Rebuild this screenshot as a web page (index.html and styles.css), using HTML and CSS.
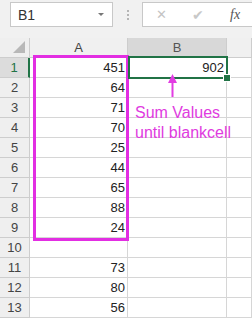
FILE: index.html
```html
<!DOCTYPE html>
<html lang="en">
<head>
    <meta charset="UTF-8">
    <title>Sum until blank cell</title>
    <link rel="stylesheet" href="styles.css">
</head>
<body>
    <div class="toolbar">
        <div class="name-box">
            <span>B1</span>
            <span class="drop"></span>
        </div>
        <div class="dots"><i></i><i></i><i></i></div>
        <div class="formula-box">
            <span class="icon cancel">&#x2715;</span>
            <span class="icon enter">&#x2714;</span>
            <span class="icon fx">fx</span>
        </div>
    </div>

    <div class="sheet-wrap">
        <div class="sheet">
            <div class="hd corner">
                <svg width="14" height="14" viewBox="0 0 14 14"><polygon points="13,1 13,13 1,13" fill="#b8b8b8"/></svg>
            </div>
            <div class="hd col">A</div>
            <div class="hd col sel-col">B</div>
            <div class="hd col"></div>

            <div class="hd row sel-row">1</div><div class="cell num">451</div><div class="cell num">902</div><div class="cell"></div>
            <div class="hd row">2</div><div class="cell num">64</div><div class="cell"></div><div class="cell"></div>
            <div class="hd row">3</div><div class="cell num">71</div><div class="cell"></div><div class="cell"></div>
            <div class="hd row">4</div><div class="cell num">70</div><div class="cell"></div><div class="cell"></div>
            <div class="hd row">5</div><div class="cell num">25</div><div class="cell"></div><div class="cell"></div>
            <div class="hd row">6</div><div class="cell num">44</div><div class="cell"></div><div class="cell"></div>
            <div class="hd row">7</div><div class="cell num">65</div><div class="cell"></div><div class="cell"></div>
            <div class="hd row">8</div><div class="cell num">88</div><div class="cell"></div><div class="cell"></div>
            <div class="hd row">9</div><div class="cell num">24</div><div class="cell"></div><div class="cell"></div>
            <div class="hd row">10</div><div class="cell"></div><div class="cell"></div><div class="cell"></div>
            <div class="hd row">11</div><div class="cell num">73</div><div class="cell"></div><div class="cell"></div>
            <div class="hd row">12</div><div class="cell num">80</div><div class="cell"></div><div class="cell"></div>
            <div class="hd row">13</div><div class="cell num">56</div><div class="cell"></div><div class="cell"></div>
        </div>

        <!-- overlays -->
        <div class="range-box"></div>
        <div class="selection"><span class="handle"></span></div>
        <div class="arrow">
            <svg width="11" height="24" viewBox="0 0 11 24">
                <polygon points="5.5,0 10,9 1,9" fill="#e23ce2"/>
                <rect x="4.5" y="8" width="2" height="15" fill="#e23ce2"/>
            </svg>
        </div>
        <div class="note">Sum Values<br>until blankcell</div>
    </div>
</body>
</html>
```

FILE: styles.css
```css
body {
    margin: 0;
    font-family: "Liberation Sans", Arial, sans-serif;
    background: #ffffff;
    width: 252px;
    overflow: hidden;
}
.toolbar {
    height: 38px;
    background: #f1f1f1;
    position: relative;
    display: flex;
    align-items: flex-start;
    padding-top: 2px;
    box-sizing: border-box;
}
.name-box {
    margin-left: 10px;
    width: 103px;
    height: 25px;
    box-sizing: border-box;
    background: #fff;
    border: 1px solid #c8c8c8;
    display: flex;
    align-items: center;
    justify-content: space-between;
    padding: 0 8px 0 7px;
    font-size: 14px;
    color: #333;
}
.drop {
    width: 0;
    height: 0;
    border-left: 3px solid transparent;
    border-right: 3px solid transparent;
    border-top: 3px solid #777;
}
.dots {
    width: 29px;
    height: 25px;
    display: flex;
    flex-direction: column;
    align-items: center;
    justify-content: center;
    gap: 2px;
}
.dots i {
    width: 2px;
    height: 2px;
    background: #b5b5b5;
}
.formula-box {
    flex: 1;
    height: 25px;
    box-sizing: border-box;
    background: #fff;
    border: 1px solid #c8c8c8;
    border-right: none;
    display: flex;
    align-items: center;
}
.icon {
    color: #c4c4c4;
    font-size: 13px;
}
.cancel {
    margin-left: 13px;
}
.enter {
    margin-left: 25px;
    font-size: 14px;
    color: #c8c8c8;
}
.fx {
    margin-left: 26px;
    font-family: "Liberation Serif", serif;
    font-style: italic;
    font-size: 14px;
    color: #555;
}
.sheet-wrap {
    position: relative;
}
.sheet {
    display: grid;
    grid-template-columns: 30px 98px 99px 25px;
    grid-auto-rows: 20px;
    font-size: 13px;
    color: #222;
}
.hd {
    background: #efefef;
    border-right: 1px solid #cdcdcd;
    border-bottom: 1px solid #cdcdcd;
    display: flex;
    align-items: center;
    justify-content: center;
    color: #444;
    box-sizing: border-box;
}
.corner {
    justify-content: flex-end;
    align-items: flex-end;
    padding: 0 3px 3px 0;
}
.col {
    background: #f0f0f0;
}
.sel-col {
    background: #d8d8d8;
    border-bottom: 2px solid #217346;
    color: #555;
}
.sel-row {
    background: #dcdcdc;
    border-right: 2px solid #217346;
    color: #217346;
}
.cell {
    border-right: 1px solid #d6d6d6;
    border-bottom: 1px solid #d6d6d6;
    box-sizing: border-box;
    display: flex;
    align-items: center;
}
.num {
    justify-content: flex-end;
    padding-right: 2px;
}
.range-box {
    position: absolute;
    left: 33px;
    top: 17px;
    width: 96px;
    height: 186px;
    border: 3px solid #e22ee2;
    box-sizing: border-box;
}
.selection {
    position: absolute;
    left: 128px;
    top: 18px;
    width: 100px;
    height: 23px;
    border: 2px solid #217346;
    box-sizing: border-box;
}
.handle {
    position: absolute;
    right: -5px;
    bottom: -5px;
    width: 6px;
    height: 6px;
    background: #217346;
    border: 1px solid #fff;
}
.arrow {
    position: absolute;
    left: 167px;
    top: 36px;
    line-height: 0;
}
.note {
    position: absolute;
    left: 135px;
    top: 65px;
    font-size: 16px;
    line-height: 20px;
    color: #e03be0;
}
```
